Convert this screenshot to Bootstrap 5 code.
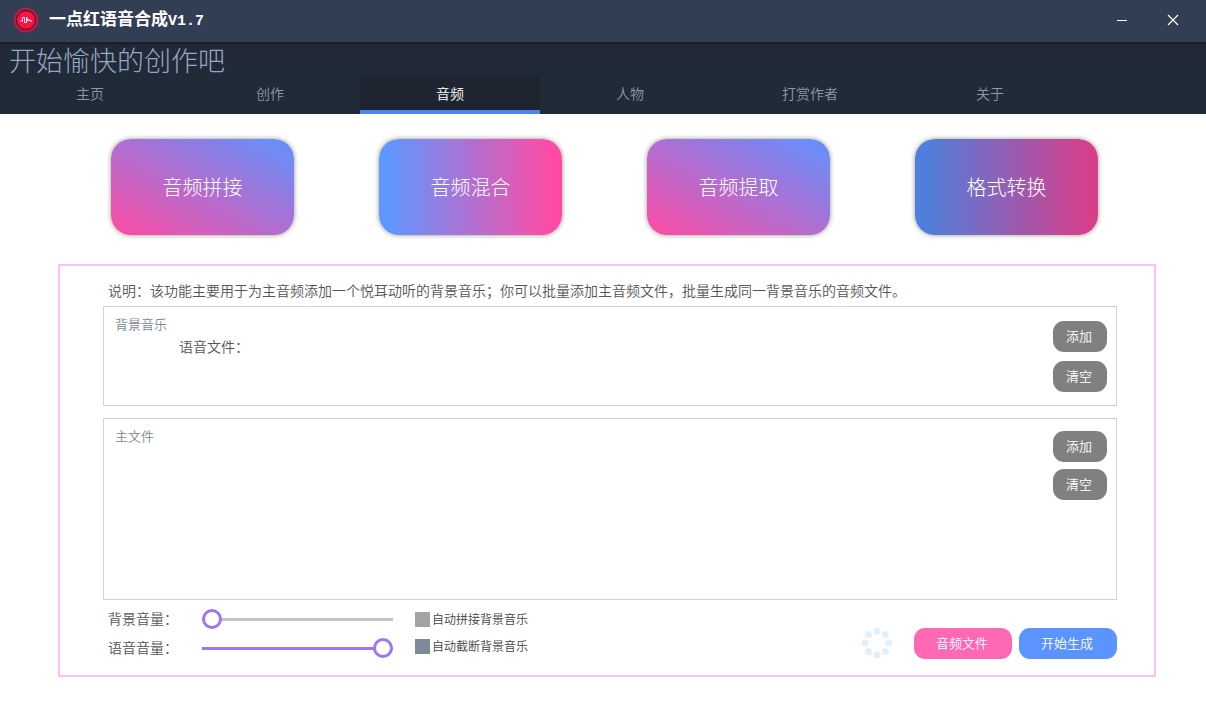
<!DOCTYPE html>
<html lang="zh-CN">
<head>
<meta charset="utf-8">
<meta name="viewport" content="width=device-width, initial-scale=1">
<title>一点红语音合成V1.7</title>
<link href="https://cdn.jsdelivr.net/npm/bootstrap@5.3.0/dist/css/bootstrap.min.css" rel="stylesheet">
<style>
body { font-family: "Noto Sans CJK SC", sans-serif; font-size: 14px; font-weight: 350; line-height: 20px; color: #555; background: #fff; }
.title-bar { height: 42px; background: #323e54; padding: 0 8px 2px 13px; }
.app-name { font-size: 17px; font-weight: 700; color: #fff; margin: 0 0 0 10px; line-height: 20px; }
.app-name span { font-family: "Liberation Mono", monospace; font-size: 15px; }
.win-btn { width: 51px; height: 38px; padding: 0; border: 0; background: none; line-height: 12px; }
.win-btn svg { display: block; margin: auto; }
.app-head { background: linear-gradient(#161c2e, #222836 4px, #202b38 36px); }
.slogan { font-size: 27px; font-weight: 300; line-height: 32px; color: #93a9c4; padding: 2px 0 0 9px; height: 32px; margin: 0; }
.tab-link { width: 180px; height: 40px; line-height: 38px; text-align: center; text-decoration: none; color: #8f98a3; }
.tab-link:hover { color: #fff; }
.tab-link.current { color: #fff; background: #1f2530; border-bottom: 4px solid #4d83ee; }
.tile-row { padding: 25px 108px 29px 111px; }
.tile-btn { width: 183px; height: 96px; border: 0; border-radius: 20px; color: #fff; font-size: 20px; font-weight: 300; box-shadow: 0 0 5px rgba(60, 60, 40, .55); background: linear-gradient(to top right, #ff4ba3, #5f92ff); }
.tile-btn.across { background: linear-gradient(to right, #5f96ff 5%, #ff4ba3 95%); }
.tile-btn.across-dim { background: linear-gradient(to right, #4e7fdc 5%, #d83f8b 95%); }
.work-panel { margin: 0 50px 20px 58px; border: 2px solid #fcbff8; padding: 14px 37px 16px 43px; }
.intro { margin: 0 0 6px 5px; }
.file-box { border: 1px solid #d3d3d3; padding: 7px 9px 8px 11px; }
.file-box.bgm { min-height: 100px; margin-bottom: 12px; }
.file-box.main { min-height: 182px; }
.box-label { font-size: 13px; color: #7b8894; }
.plain-input { border: 0; outline: 0; background: transparent; padding: 0; resize: none; min-width: 0; font-size: 13px; color: #5c5c5c; }
.voice-row { padding-left: 64px; margin-top: 2px; }
.btn-stack { padding-top: 7px; gap: 9px; }
.main .btn-stack { padding-top: 5px; gap: 7px; }
.pill { height: 31px; border: 0; border-radius: 11px; color: #fff; font-size: 13px; font-weight: 350; padding: 0 2px 1px 0; background: #808080; width: 54px; }
.pill.wide { width: 98px; }
.pill.pink { background: #ff69b4; }
.pill.blue { background: #5c94ff; }
.sliders { padding: 9px 0 0 5px; gap: 9px; }
.slider-row label { width: 94px; line-height: 18px; }
.volume { -webkit-appearance: none; appearance: none; width: 191px; height: 20px; margin: 0; background: linear-gradient(#c5c3cb, #c5c3cb) center / 100% 3px no-repeat; }
.volume.full { background-image: linear-gradient(#9c78ec, #9c78ec); }
.volume::-webkit-slider-thumb { -webkit-appearance: none; width: 20px; height: 20px; border: 3px solid #9c78ec; border-radius: 50%; background: #fff; }
.checks { padding: 12px 0 0 22px; gap: 12px; }
.check-row { height: 15px; gap: 2px; font-size: 12px; line-height: 14px; color: #444; }
.check-row input { -webkit-appearance: none; appearance: none; width: 15px; height: 15px; margin: 0; background: #a3a3a3; }
.check-row input.slate { background: #7c8b97; }
.actions { padding-top: 27px; gap: 7px; }
.busy { margin-right: 14px; }
</style>
</head>
<body>
<header>
  <div class="title-bar d-flex align-items-center">
    <svg width="26" height="26" viewBox="0 0 26 26" aria-hidden="true">
      <circle cx="13" cy="13" r="11.3" fill="#5a1f38" stroke="#d4143f" stroke-width="1.8"/>
      <circle cx="13" cy="13" r="8.8" fill="#fb1443"/>
      <path d="M7.500 14h2V10.500h2V15.500h2V10l1.500 4 1-1.500 1 1.500h2" fill="none" stroke="#fff" stroke-width=".9"/>
    </svg>
    <h1 class="app-name">一点红语音合成<span>V1.7</span></h1>
    <div class="ms-auto d-flex">
      <button class="win-btn" type="button" aria-label="最小化"><svg width="12" height="12" viewBox="0 0 12 12"><path d="M1 6.500h10" stroke="#fff"/></svg></button>
      <button class="win-btn" type="button" aria-label="关闭"><svg width="12" height="12" viewBox="0 0 12 12"><path d="M1 1l10 10M11 1L1 11" stroke="#fff" stroke-width="1.2"/></svg></button>
    </div>
  </div>
  <div class="app-head">
    <p class="slogan">开始愉快的创作吧</p>
    <nav class="d-flex">
      <a class="tab-link" href="#">主页</a>
      <a class="tab-link" href="#">创作</a>
      <a class="tab-link current" href="#" aria-current="page">音频</a>
      <a class="tab-link" href="#">人物</a>
      <a class="tab-link" href="#">打赏作者</a>
      <a class="tab-link" href="#">关于</a>
    </nav>
  </div>
</header>
<main>
  <div class="tile-row d-flex justify-content-between">
    <button class="tile-btn" type="button">音频拼接</button>
    <button class="tile-btn across" type="button">音频混合</button>
    <button class="tile-btn" type="button">音频提取</button>
    <button class="tile-btn across-dim" type="button">格式转换</button>
  </div>
  <section class="work-panel">
    <p class="intro">说明：该功能主要用于为主音频添加一个悦耳动听的背景音乐；你可以批量添加主音频文件，批量生成同一背景音乐的音频文件。</p>
    <div class="file-box bgm d-flex">
      <div class="flex-grow-1">
        <div class="box-label">背景音乐</div>
        <div class="voice-row d-flex">
          <label for="voiceFile">语音文件：</label>
          <input class="plain-input flex-grow-1" id="voiceFile" type="text">
        </div>
      </div>
      <div class="btn-stack d-flex flex-column">
        <button class="pill" type="button">添加</button>
        <button class="pill" type="button">清空</button>
      </div>
    </div>
    <div class="file-box main d-flex">
      <div class="flex-grow-1 d-flex flex-column">
        <label class="box-label" for="mainFiles">主文件</label>
        <textarea class="plain-input flex-grow-1" id="mainFiles"></textarea>
      </div>
      <div class="btn-stack d-flex flex-column">
        <button class="pill" type="button">添加</button>
        <button class="pill" type="button">清空</button>
      </div>
    </div>
    <div class="d-flex align-items-start">
      <div class="sliders d-flex flex-column">
        <div class="slider-row d-flex">
          <label for="bgmVolume">背景音量：</label>
          <input class="volume" id="bgmVolume" type="range" min="0" max="100" value="0">
        </div>
        <div class="slider-row d-flex">
          <label for="voiceVolume">语音音量：</label>
          <input class="volume full" id="voiceVolume" type="range" min="0" max="100" value="100">
        </div>
      </div>
      <div class="checks d-flex flex-column">
        <div class="check-row d-flex">
          <input id="autoJoin" type="checkbox"><label for="autoJoin">自动拼接背景音乐</label>
        </div>
        <div class="check-row d-flex">
          <input class="slate" id="autoCut" type="checkbox"><label for="autoCut">自动截断背景音乐</label>
        </div>
      </div>
      <div class="actions ms-auto d-flex align-items-center">
        <svg class="busy" width="32" height="32" viewBox="0 0 32 32" fill="#e2effd" aria-hidden="true">
          <circle cx="16" cy="4.200" r="3.500"/><circle cx="24.400" cy="7.600" r="3.500"/><circle cx="27.800" cy="16" r="3.500"/><circle cx="24.400" cy="24.400" r="3.500"/>
          <circle cx="16" cy="27.800" r="3.500"/><circle cx="7.600" cy="24.400" r="3.500"/><circle cx="4.200" cy="16" r="3.500"/><circle cx="7.600" cy="7.600" r="3.500"/>
        </svg>
        <button class="pill wide pink" type="button">音频文件</button>
        <button class="pill wide blue" type="button">开始生成</button>
      </div>
    </div>
  </section>
</main>
<script src="https://cdn.jsdelivr.net/npm/bootstrap@5.3.0/dist/js/bootstrap.bundle.min.js"></script>
</body>
</html>
